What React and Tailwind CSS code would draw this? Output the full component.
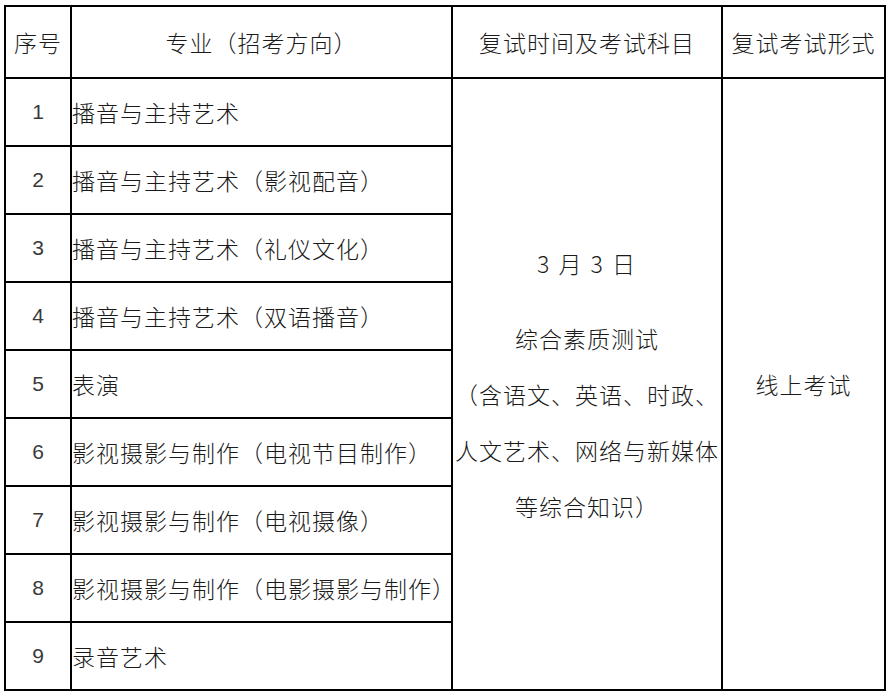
import React from 'react';

// 复试安排表
const majors = [
  '播音与主持艺术',
  '播音与主持艺术（影视配音）',
  '播音与主持艺术（礼仪文化）',
  '播音与主持艺术（双语播音）',
  '表演',
  '影视摄影与制作（电视节目制作）',
  '影视摄影与制作（电视摄像）',
  '影视摄影与制作（电影摄影与制作）',
  '录音艺术',
];

const cjk = "font-['Noto_Sans_CJK_SC',sans-serif]";

const App = () => {
  return (
    <div className="w-[890px] h-[694px] bg-white pt-[5px] pl-[4px]">
      <div
        className={`grid w-[882px] grid-cols-[64px_379px_268px_161px] grid-rows-[70px_repeat(9,66px)] gap-[2px] border-2 border-black bg-black text-[23px] font-light tracking-[1px] text-[#1a1a1a] ${cjk}`}
      >
        {/* Header */}
        <div className="flex items-center justify-center bg-white">序号</div>
        <div className="flex items-center justify-center bg-white">专业（招考方向）</div>
        <div className="flex items-center justify-center bg-white">复试时间及考试科目</div>
        <div className="flex items-center justify-center bg-white">复试考试形式</div>

        {majors.map((name, i) => (
          <React.Fragment key={i}>
            <div
              className="flex items-center justify-center bg-white font-['Liberation_Sans',sans-serif] text-[21px] font-normal tracking-normal text-[#3a3a3a]"
              style={{ gridRow: i + 2, gridColumn: 1 }}
            >
              {i + 1}
            </div>
            <div
              className="flex items-center bg-white"
              style={{ gridRow: i + 2, gridColumn: 2 }}
            >
              {name}
            </div>
          </React.Fragment>
        ))}

        {/* 复试时间及科目 (spans all rows) */}
        <div className="col-start-3 row-start-2 row-span-9 flex flex-col items-center justify-center bg-white text-center leading-[56px] whitespace-nowrap">
          <div className="mb-[19px] tracking-[2px]">3 月 3 日</div>
          <div>综合素质测试</div>
          <div>（含语文、英语、时政、</div>
          <div>人文艺术、网络与新媒体</div>
          <div>等综合知识）</div>
        </div>

        <div className="col-start-4 row-start-2 row-span-9 flex items-center justify-center bg-white">
          线上考试
        </div>
      </div>
    </div>
  );
};

export default App;
